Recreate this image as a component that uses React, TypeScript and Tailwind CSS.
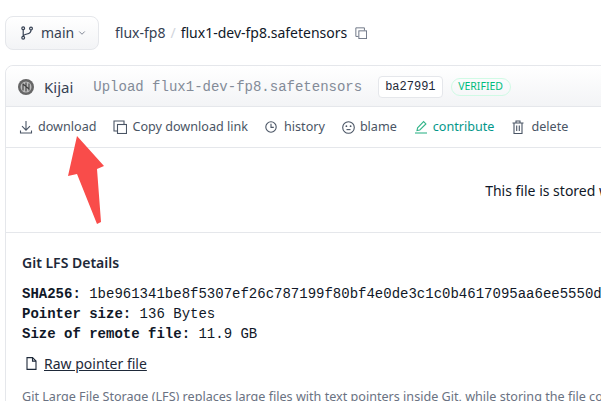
import { ChevronDown } from 'lucide-react';

const sans = "font-['Noto_Sans',sans-serif]";
const mono = "font-['Liberation_Mono',monospace]";

function DownloadIcon() {
  return (
    <svg width="14" height="14" viewBox="0 0 14 14" fill="none" stroke="currentColor" strokeWidth="1.1" className="mr-[5px] ml-[1px]">
      <path d="M7 1v9M3 6.2 7 10.2 11 6.2M1.5 10.5v2.5h11v-2.5" />
    </svg>
  );
}

function CopyIcon({ size = 14 }: { size?: number }) {
  return (
    <svg width={size} height={size} viewBox="0 0 14 14" fill="none" stroke="currentColor" strokeWidth="1.1">
      <path d="M4 11H1V1h10v3" />
      <rect x="4.5" y="4.5" width="9" height="9" />
    </svg>
  );
}

function ClockIcon() {
  return (
    <svg width="12" height="12" viewBox="0 0 12 12" fill="none" stroke="currentColor" strokeWidth="1.1">
      <circle cx="6" cy="6" r="5.2" />
      <path d="M6 2.8v3.6h2.8" />
    </svg>
  );
}

function BlameIcon() {
  return (
    <svg width="13" height="13" viewBox="0 0 13 13" fill="none" stroke="currentColor" strokeWidth="1.1">
      <circle cx="6.5" cy="6.5" r="5.8" />
      <circle cx="4.4" cy="5.2" r="0.9" fill="currentColor" stroke="none" />
      <circle cx="8.6" cy="5.2" r="0.9" fill="currentColor" stroke="none" />
      <path d="M4.5 8.6h4" />
    </svg>
  );
}

function PenIcon() {
  return (
    <svg width="14" height="14" viewBox="0 0 14 14" fill="none" stroke="#34b58a" strokeWidth="1.1">
      <path d="M1 13h12" />
      <path d="M3 10.5 3.6 7.8 9.6 1.6 11.9 3.9 5.8 10Z" />
    </svg>
  );
}

function TrashIcon() {
  return (
    <svg width="14" height="14" viewBox="0 0 14 14" fill="none" stroke="currentColor" strokeWidth="1.1">
      <path d="M1.5 3h11M5 3V1h4v2M3 3v10.5h8V3M5.7 5.5v5.5M8.3 5.5v5.5" />
    </svg>
  );
}

function BranchIcon() {
  return (
    <svg width="12" height="14" viewBox="0 0 12 14" fill="none" stroke="currentColor" strokeWidth="1.2" className="mr-[8px] shrink-0">
      <circle cx="2.2" cy="2.2" r="1.4" />
      <circle cx="2.2" cy="11.8" r="1.4" />
      <circle cx="10" cy="2.6" r="1.4" />
      <path d="M2.2 3.6v6.8M10 4c0 3-2 3.6-4 4s-3.8 1-3.8 2.4" />
    </svg>
  );
}

function FileIcon() {
  return (
    <svg width="11" height="13" viewBox="0 0 11 13" fill="none" stroke="currentColor" strokeWidth="1.1" className="ml-[4px] mr-[7px]">
      <path d="M1 .6h5.5l3.5 3.5v8.3H1Z" />
      <path d="M6.5.6v3.5H10" />
    </svg>
  );
}

const actions = [
  { label: 'download', icon: <DownloadIcon /> },
  { label: 'Copy download link', icon: <span className="mr-[5px]"><CopyIcon /></span> },
  { label: 'history', icon: <span className="mr-[7px]"><ClockIcon /></span> },
  { label: 'blame', icon: <span className="mr-[5px]"><BlameIcon /></span> },
  { label: 'contribute', icon: <span className="mr-[5px]"><PenIcon /></span>, green: true },
  { label: 'delete', icon: <span className="mr-[6px]"><TrashIcon /></span> },
];

function Arrow() {
  return (
    <svg className="absolute left-0 top-0 pointer-events-none" width="601" height="401" viewBox="0 0 601 401">
      <polygon points="77,136 104,166 97,169 101,222 97,224 77,174 68,176" fill="#f94c4a" />
    </svg>
  );
}

function Avatar() {
  return (
    <svg width="16" height="16" viewBox="0 0 16 16" className="shrink-0">
      <circle cx="8" cy="8" r="8" fill="#666" />
      <circle cx="8" cy="8" r="5.5" fill="#bdbdbd" />
      <path d="M5 4.5v7M8 3.5v9M11 4.5v7M5 5l6 5" stroke="#3f3f3f" strokeWidth="1.1" fill="none" />
    </svg>
  );
}

export default function App() {
  return (
    <div className={`relative w-[601px] h-[401px] overflow-hidden bg-white ${sans}`}>
      <div className="flex items-center h-[65px] pl-[5px]">
        <button className="flex items-center h-[34px] w-[94px] pl-[15px] rounded-lg border border-gray-200 bg-gradient-to-b from-white to-gray-100 text-[14px] text-gray-700">
          <BranchIcon />
          main
          <ChevronDown className="h-[10px] w-[10px] ml-[3px] text-gray-500" strokeWidth={2} />
        </button>
        <span className="ml-[16px] text-[14px] text-gray-700">flux-fp8</span>
        <span className="mx-[5px] text-[14px] text-gray-300">/</span>
        <span className="text-[14px] text-gray-900">flux1-dev-fp8.safetensors</span>
        <span className="ml-[8px] text-gray-500"><CopyIcon size={12} /></span>
      </div>

      <div className="ml-[5px] w-[1494px] rounded-t-lg border border-gray-200">
        <div className="flex items-center h-[41px] pl-[12px] pt-[2px] border-b border-gray-200 rounded-t-lg bg-gradient-to-t from-gray-100 to-white">
          <Avatar />
          <span className="ml-[10px] text-[15px] text-gray-700">Kijai</span>
          <span className={`ml-[20px] text-[14px] text-[#838b98] ${mono}`}>Upload flux1-dev-fp8.safetensors</span>
          <span className={`ml-[16px] flex items-center h-[22px] px-[6px] rounded border border-gray-200 bg-white text-[12px] text-gray-800 ${mono}`}>ba27991</span>
          <span className="ml-[8px] flex items-center justify-center h-[18px] w-[60px] rounded-full border border-emerald-100 text-[10.5px] text-emerald-500">VERIFIED</span>
        </div>

        <div className="flex items-center h-[41px] pl-[12px] pt-[1px] gap-[17px] border-b border-gray-200 text-[12.6px] text-gray-600">
          {actions.map((a) => (
            <span key={a.label} className={`flex items-center ${a.green ? 'text-teal-600' : ''}`}>
              {a.icon}
              {a.label}
            </span>
          ))}
        </div>

        <div className="flex items-center justify-center h-[85px] border-b border-gray-200 text-[14px] text-gray-900">
          This file is stored with Git LFS. It is too big to display, but you can still download it.
        </div>

        <div className="px-[16px] pt-[20px]">
          <h3 className="text-[14px] font-semibold leading-[20px] text-gray-800">Git LFS Details</h3>
          <div className={`mt-[11px] text-[14px] leading-[20px] text-gray-900 ${mono}`}>
            <p className="whitespace-nowrap"><b>SHA256:</b> 1be961341be8f5307ef26c787199f80bf4e0de3c1c0b4617095aa6ee5550d</p>
            <p><b>Pointer size:</b> 136 Bytes</p>
            <p><b>Size of remote file:</b> 11.9 GB</p>
          </div>
          <div className="flex items-center mt-[9px] h-[20px] text-[14px] text-gray-800">
            <FileIcon />
            <span className="underline">Raw pointer file</span>
          </div>
          <p className="mt-[15px] whitespace-nowrap text-[12.6px] text-gray-500">
            Git Large File Storage (LFS) replaces large files with text pointers inside Git, while storing the file contents on a remote server.
          </p>
        </div>
      </div>
      <Arrow />
    </div>
  );
}
